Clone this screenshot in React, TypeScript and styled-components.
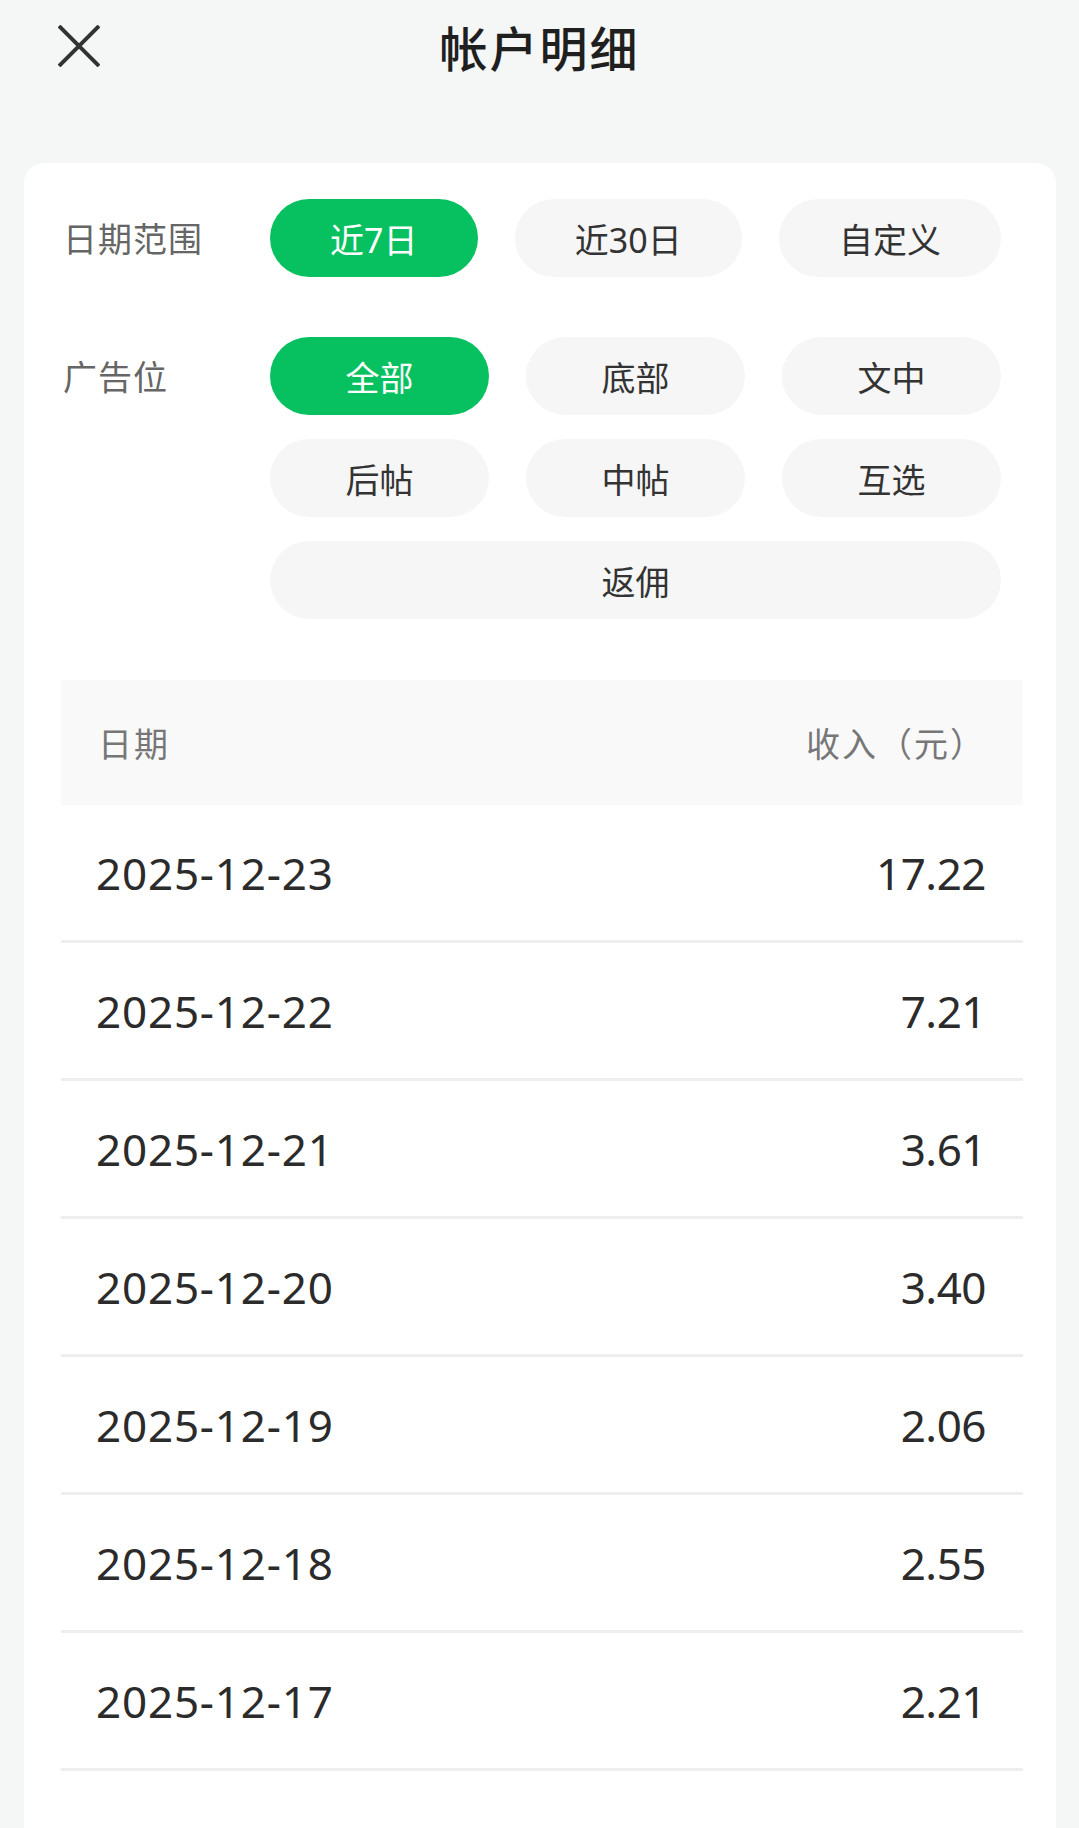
import { useState } from "react";
import styled, { createGlobalStyle } from "styled-components";

const GlobalStyle = createGlobalStyle`
  html, body {
    margin: 0;
    padding: 0;
    background: #f5f6f6;
  }
  body {
    font-family: "Noto Sans", "Noto Sans CJK SC", sans-serif;
    color: #333;
  }
  * {
    box-sizing: border-box;
  }
`;

interface IActive {
  active?: boolean;
}

interface IPillGrid {
  full?: boolean;
}

// header
const Header = styled.header`
  display: grid;
  grid-template-columns: 1fr auto 1fr;
  align-items: center;
  height: 91px;
  padding: 0 58px;
`;

const CloseButton = styled.button`
  justify-self: start;
  display: flex;
  align-items: center;
  justify-content: center;
  width: 42px;
  height: 42px;
  padding: 0;
  border: none;
  background: transparent;
  color: #333;
  cursor: pointer;
`;

const Title = styled.h1`
  margin: 0;
  font-family: "Noto Sans CJK SC", sans-serif;
  font-size: 48px;
  font-weight: 500;
  color: #1f1f1f;
  letter-spacing: 2px;
`;

// card
const Card = styled.main`
  margin: 72px 23px 0 24px;
  background: #fff;
  border-radius: 20px 20px 0 0;
  padding-top: 36px;
  min-height: 1665px;
`;

const Filters = styled.section`
  display: flex;
  flex-direction: column;
  gap: 60px;
  padding: 0 55px 0 39px;
`;

const FilterRow = styled.div`
  display: grid;
  grid-template-columns: 207px 1fr;
  align-items: start;
`;

const FilterLabel = styled.div`
  font-family: "Noto Sans CJK SC", sans-serif;
  font-size: 34px;
  line-height: 78px;
  letter-spacing: 1px;
  color: #666;
`;

const PillFlex = styled.div`
  display: flex;
  gap: 37px;
`;

const PillGrid = styled.div`
  display: grid;
  grid-template-columns: repeat(3, 1fr);
  column-gap: 37px;
  row-gap: 24px;
`;

const Pill = styled.button<IActive & IPillGrid>`
  flex: 1 1 auto;
  grid-column: ${({ full }) => (full ? "1 / -1" : "auto")};
  height: 78px;
  padding: 0;
  border: none;
  border-radius: 39px;
  font-family: "Noto Sans", "Noto Sans CJK SC", sans-serif;
  font-size: 34px;
  background: ${({ active }) => (active ? "#07c160" : "#f6f6f6")};
  color: ${({ active }) => (active ? "#fff" : "#333")};
  cursor: pointer;
`;

// table
const Table = styled.section`
  margin: 61px 33px 0 37px;
`;

const TableHead = styled.div`
  display: flex;
  justify-content: space-between;
  align-items: center;
  height: 125px;
  padding: 0 37px;
  background: #f9f9f9;
  font-family: "Noto Sans CJK SC", sans-serif;
  font-size: 34px;
  letter-spacing: 2px;
  color: #777;
`;

const TableRow = styled.div`
  display: flex;
  justify-content: space-between;
  align-items: center;
  height: 138px;
  padding: 0 37px 0 35px;
  border-bottom: 3px solid #eeeeee;
  font-size: 44px;
  color: #2b2b2b;
`;

const DateCell = styled.span`
  letter-spacing: 0.8px;
`;

const AmountCell = styled.span`
  letter-spacing: -0.5px;
`;

const dateRanges = ["近7日", "近30日", "自定义"];
const slots = ["全部", "底部", "文中", "后帖", "中帖", "互选", "返佣"];

const records = [
  { date: "2025-12-23", amount: "17.22" },
  { date: "2025-12-22", amount: "7.21" },
  { date: "2025-12-21", amount: "3.61" },
  { date: "2025-12-20", amount: "3.40" },
  { date: "2025-12-19", amount: "2.06" },
  { date: "2025-12-18", amount: "2.55" },
  { date: "2025-12-17", amount: "2.21" },
];

function App(): JSX.Element {
  const [range, setRange] = useState("近7日");
  const [slot, setSlot] = useState("全部");

  return (
    <>
      <GlobalStyle />
      <Header>
        <CloseButton aria-label="关闭">
          <svg width="42" height="42" viewBox="0 0 42 42">
            <path
              d="M1 1 L41 41 M41 1 L1 41"
              stroke="currentColor"
              strokeWidth="4"
              fill="none"
            />
          </svg>
        </CloseButton>
        <Title>帐户明细</Title>
        <div />
      </Header>

      <Card>
        {/* filters */}
        <Filters>
          <FilterRow>
            <FilterLabel>日期范围</FilterLabel>
            <PillFlex>
              {dateRanges.map((r) => (
                <Pill key={r} active={r === range} onClick={() => setRange(r)}>
                  {r}
                </Pill>
              ))}
            </PillFlex>
          </FilterRow>
          <FilterRow>
            <FilterLabel>广告位</FilterLabel>
            <PillGrid>
              {slots.map((s, i) => (
                <Pill
                  key={s}
                  active={s === slot}
                  full={i === slots.length - 1}
                  onClick={() => setSlot(s)}
                >
                  {s}
                </Pill>
              ))}
            </PillGrid>
          </FilterRow>
        </Filters>

        {/* table */}
        <Table>
          <TableHead>
            <span>日期</span>
            <span>收入（元）</span>
          </TableHead>
          {records.map((r) => (
            <TableRow key={r.date}>
              <DateCell>{r.date}</DateCell>
              <AmountCell>{r.amount}</AmountCell>
            </TableRow>
          ))}
        </Table>
      </Card>
    </>
  );
}

export default App;
